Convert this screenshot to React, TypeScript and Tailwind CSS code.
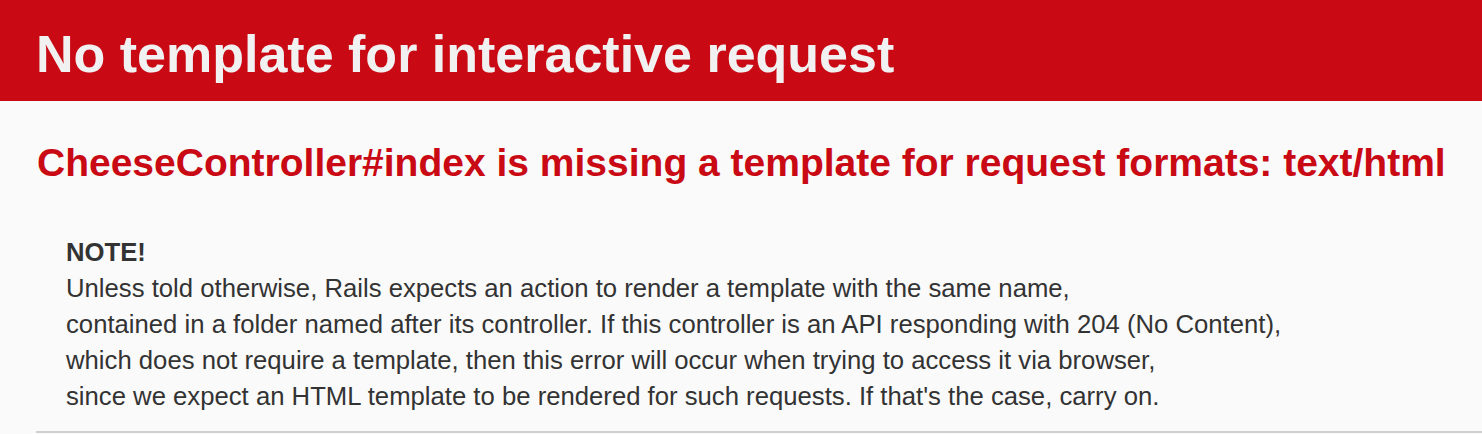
export default function App() {
    return (
        <div className="min-h-[434px] bg-[#FAFAFA] font-['Liberation_Sans',Arial,sans-serif] text-[#333333]">
            <header className="bg-[#C90914] pl-[36px] pr-[39px] pt-[26px] pb-[18px]">
                <h1 className="m-0 text-[52px] leading-[57px] font-bold text-[#F1F1F1]">
                    No template for interactive request
                </h1>
            </header>

            <main className="pl-[36px] pt-[39px]">
                <h2 className="pl-[1px] text-[39px] leading-[45px] font-bold text-[#C90914]">
                    CheeseController#index is missing a template for request formats: text/html
                </h2>

                {/* summary */}
                <p className="mt-[49px] pl-[30px] text-[25.7px] leading-[36px]">
                    <strong>NOTE!</strong><br />
                    Unless told otherwise, Rails expects an action to render a template with the same name,<br />
                    contained in a folder named after its controller. If this controller is an API responding with 204 (No Content),<br />
                    which does not require a template, then this error will occur when trying to access it via browser,<br />
                    since we expect an HTML template to be rendered for such requests. If that's the case, carry on.
                </p>

                <div className="mt-[17px] h-[2px] bg-[#D0D0D0]" />
            </main>
        </div>
    )
}
